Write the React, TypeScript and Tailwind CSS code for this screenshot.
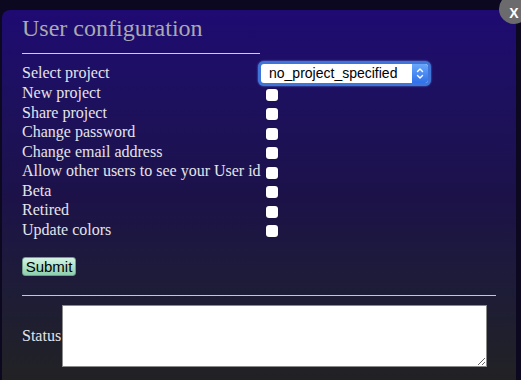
import React from "react";

const ROWS = [
  "New project",
  "Share project",
  "Change password",
  "Change email address",
  "Allow other users to see your User id",
  "Beta",
  "Retired",
  "Update colors",
];

const serif = "font-['Liberation_Serif','Times_New_Roman',serif]";
const sans = "font-['Liberation_Sans',Arial,sans-serif]";

function Check() {
  return (
    <input
      type="checkbox"
      className="ml-[4px] size-[12px] appearance-none rounded-[3px] bg-white shadow-[0_0_1px_rgba(0,0,0,0.6)]"
    />
  );
}

function ProjectSelect() {
  return (
    <div className="-ml-[4px] flex h-[25px] w-[173px] rounded-[6px] bg-[#3f74d8] p-[3px] shadow-[0_0_2px_#5a8ff0]">
      <div className="flex flex-1 items-center overflow-hidden rounded-[3px] bg-white">
        <span className={`${sans} flex-1 pl-[8px] text-[14px] leading-none text-black`}>
          no_project_specified
        </span>
        <div className="flex h-full w-[16px] items-center justify-center bg-gradient-to-b from-[#6aa8fb] to-[#2f6fe9]">
          <svg width="8" height="13" viewBox="0 0 8 13" fill="none" stroke="white" strokeWidth="1.4" strokeLinecap="round" strokeLinejoin="round">
            <path d="M1.5 4.5 L4 2 L6.5 4.5" />
            <path d="M1.5 8.5 L4 11 L6.5 8.5" />
          </svg>
        </div>
      </div>
    </div>
  );
}

export default function App() {
  return (
    <div className={`${serif} relative h-[380px] w-[521px] overflow-hidden bg-[#0b0820]`}>
      <div className="ml-[2px] mt-[10px] h-[380px] w-[514px] rounded-t-[8px] bg-gradient-to-b from-[#1f0a72] via-[#1c1248] to-[#222222] px-[20px] pt-[5px]">
        <h2 className="text-[24px] leading-[27px] text-[#a9a9b0]">User configuration</h2>
        <div className="mt-[11px] w-[238px] border-t border-[#cfcfd6]" />

        <div className="mt-[7px] flex h-[24px] items-center">
          <label className="w-[240px] pb-[1px] text-[16px] text-[#e4e4ea]">Select project</label>
          <ProjectSelect />
        </div>

        {ROWS.map((r) => (
          <div key={r} className="flex h-[19.5px] items-center">
            <label className="w-[240px] whitespace-nowrap pb-[3px] text-[16px] text-[#e4e4ea]">{r}</label>
            <Check />
          </div>
        ))}

        <button
          className={`${sans} mt-[16px] flex h-[19px] w-[54px] items-center justify-center rounded-[3px] border border-[#6f9f88] bg-gradient-to-b from-[#d4f4e4] to-[#8ccfae] text-[15px] leading-none text-black`}
        >
          Submit
        </button>

        <div className="mt-[19px] w-[474px] border-t border-[#c8c8cc]" />

        <div className="mt-[9px] flex items-center">
          <label className="w-[40px] text-[16px] text-[#e4e4ea]">Status</label>
          <textarea className="h-[62px] w-[425px] border border-[#8a8a8a] bg-white" />
        </div>
      </div>

      <div className="absolute left-[499px] top-[-6px] flex size-[30px] items-center justify-center rounded-full bg-[#6b6b6e] pt-[8px]">
        <span className={`${sans} text-[14px] font-bold leading-none text-white`}>X</span>
      </div>
    </div>
  );
}
